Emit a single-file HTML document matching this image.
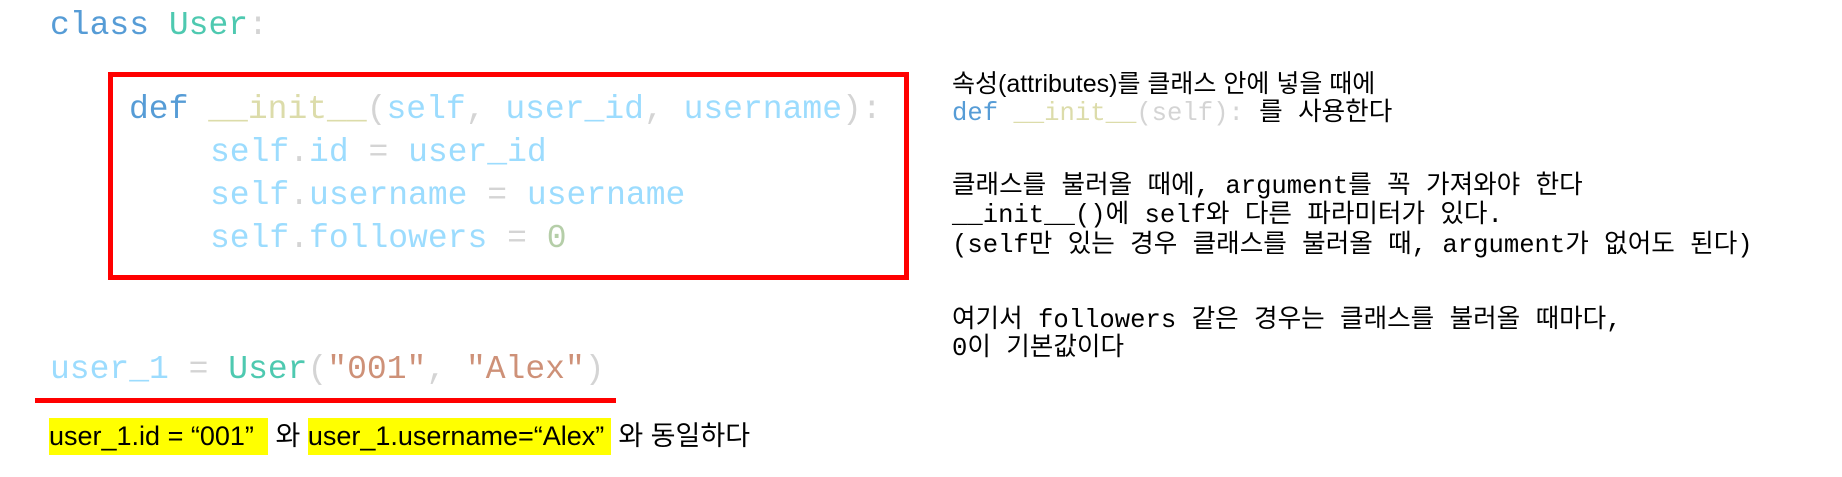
<!DOCTYPE html>
<html><head><meta charset="utf-8"><style>
body{margin:0;width:1842px;height:477px;background:#fff;position:relative;overflow:hidden}
.m{position:absolute;font-family:"Liberation Mono","Noto Sans CJK KR",monospace;white-space:pre;line-height:1}
.c{font-size:33px}
.r{font-size:25.6px;color:#000}
.s{position:absolute;font-family:"Liberation Sans","Noto Sans CJK KR",sans-serif;white-space:pre;line-height:1}
.k{color:#569cd6}.t{color:#4ec9b0}.f{color:#dcdcaa}.v{color:#9cdcfe}.p{color:#d4d4d4}.q{color:#ce9178}.n{color:#b5cea8}
.hl{background:#ffff00;display:inline-block;height:37px;line-height:37px}
</style></head><body>
<div class="m c" style="left:50px;top:9px"><span class="k">class</span> <span class="t">User</span><span class="p">:</span></div>
<div style="position:absolute;left:108px;top:72px;width:791px;height:198px;border:5px solid #ff0000"></div>
<div class="m c" style="left:129px;top:93px"><span class="k">def</span> <span class="f">__init__</span><span class="p">(</span><span class="v">self</span><span class="p">,</span> <span class="v">user_id</span><span class="p">,</span> <span class="v">username</span><span class="p">):</span></div>
<div class="m c" style="left:210px;top:136px"><span class="v">self</span><span class="p">.</span><span class="v">id</span> <span class="p">=</span> <span class="v">user_id</span></div>
<div class="m c" style="left:210px;top:179px"><span class="v">self</span><span class="p">.</span><span class="v">username</span> <span class="p">=</span> <span class="v">username</span></div>
<div class="m c" style="left:210px;top:222px"><span class="v">self</span><span class="p">.</span><span class="v">followers</span> <span class="p">=</span> <span class="n">0</span></div>
<div class="m c" style="left:50px;top:353px"><span class="v">user_1</span> <span class="p">=</span> <span class="t">User</span><span class="p">(</span><span class="q">"001"</span><span class="p">,</span> <span class="q">"Alex"</span><span class="p">)</span></div>
<div style="position:absolute;left:35px;top:398px;width:581px;height:5px;background:#ff0000"></div>
<div class="s" style="left:49px;top:418px;font-size:27px;color:#000"><span class="hl" style="width:219px">user_1.id = “001”</span> 와 <span class="hl" style="width:303px">user_1.username=“Alex”</span> 와 동일하다</div>

<div class="s" style="left:952px;top:72px;font-size:25px;color:#000">속성(attributes)를 클래스 안에 넣을 때에</div>
<div class="m r" style="left:952px;top:101px"><span class="k">def</span> <span class="f">__init__</span><span class="p">(self):</span> 를 사용한다</div>
<div class="m r" style="left:952px;top:174px">클래스를 불러올 때에, argument를 꼭 가져와야 한다</div>
<div class="m r" style="left:952px;top:203px">__init__()에 self와 다른 파라미터가 있다.</div>
<div class="m r" style="left:952px;top:233px">(self만 있는 경우 클래스를 불러올 때, argument가 없어도 된다)</div>
<div class="m r" style="left:952px;top:308px">여기서 followers 같은 경우는 클래스를 불러올 때마다,</div>
<div class="m r" style="left:952px;top:336px">0이 기본값이다</div>
</body></html>
